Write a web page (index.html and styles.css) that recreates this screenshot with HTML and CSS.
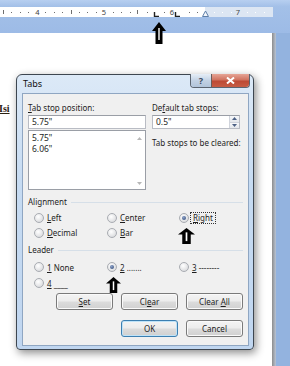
FILE: index.html
```html
<!DOCTYPE html>
<html lang="en">
<head>
  <meta charset="UTF-8" />
  <meta name="viewport" content="width=device-width, initial-scale=1.0" />
  <title>Tabs</title>
  <link rel="stylesheet" href="styles.css">
</head>
<body>
  <div class="top">
    <svg class="ruler" width="273" height="10" viewBox="0 0 273 10">
      <rect x="0" y="0" width="205" height="10" fill="#fff"/>
      <rect x="205" y="0" width="68" height="10" fill="#dce6f3"/>
      <g fill="#6f6f6f">
        <rect x="11" y="5" width="1" height="1"/><rect x="20" y="5" width="1" height="1"/><rect x="28" y="5" width="1" height="1"/>
        <rect x="45" y="5" width="1" height="1"/><rect x="54" y="5" width="1" height="1"/><rect x="62" y="5" width="1" height="1"/>
        <rect x="79" y="5" width="1" height="1"/><rect x="87" y="5" width="1" height="1"/><rect x="96" y="5" width="1" height="1"/>
        <rect x="113" y="5" width="1" height="1"/><rect x="121" y="5" width="1" height="1"/><rect x="130" y="5" width="1" height="1"/>
        <rect x="147" y="5" width="1" height="1"/><rect x="164" y="5" width="1" height="1"/>
        <rect x="189" y="5" width="1" height="1"/><rect x="197" y="5" width="1" height="1"/>
        <rect x="3" y="3" width="1" height="4"/><rect x="71" y="3" width="1" height="4"/><rect x="137" y="3" width="1" height="4"/>
      </g>
      <g fill="#ffffff">
        <rect x="214" y="5" width="1" height="1"/><rect x="222" y="5" width="1" height="1"/><rect x="231" y="5" width="1" height="1"/>
        <rect x="247" y="5" width="1" height="1"/><rect x="255" y="5" width="1" height="1"/><rect x="264" y="5" width="1" height="1"/>
      </g>
      <g class="ruler-num">
        <text x="37.5" y="8" text-anchor="middle">4</text>
        <text x="104" y="8" text-anchor="middle">5</text>
        <text x="172" y="8" text-anchor="middle">6</text>
        <text x="238" y="8" text-anchor="middle" fill="#7d8ea6">7</text>
      </g>
      <path d="M154.5 5v4.5h4.5" stroke="#222" stroke-width="1.4" fill="none"/>
      <path d="M175.5 5v4.5h4.5" stroke="#222" stroke-width="1.4" fill="none"/>
      <path d="M202.5 9.5l3-5.5 3 5.5z" stroke="#5d7ea8" stroke-width="1" fill="#f4f7fb"/>
    </svg>
  </div>

  <div class="main">
    <div class="page">
      <span class="isi">Isi</span>
    </div>
    <div class="page-edge"></div>
    <div class="side"></div>
  </div>

  <svg class="arrow arrow-ruler" viewBox="0 0 14 22" preserveAspectRatio="none">
    <path d="M7 0L14 9H10.5V22H3.5V9H0Z" fill="#000"/>
    <path d="M7 6V18" stroke="#fff" stroke-width="1.4"/>
  </svg>

  <div class="dialog">
    <div class="titlebar">
      <span class="title">Tabs</span>
      <div class="caption-btns">
        <span class="cap-help">?</span>
        <span class="cap-close">
          <svg width="9" height="7" viewBox="0 0 9 7"><path d="M1 0.5L8 6.5M8 0.5L1 6.5" stroke="#fff" stroke-width="2"/></svg>
        </span>
      </div>
    </div>

    <div class="panel">
      <div class="top-fields">
        <div class="col">
          <label class="lbl"><u>T</u>ab stop position:</label>
          <div class="textbox">5.75"</div>
          <div class="listbox">
            <div class="list-items">
              <div>5.75"</div>
              <div>6.06"</div>
            </div>
            <div class="list-scroll">
              <svg width="5" height="3" viewBox="0 0 5 3"><path d="M0 3L2.5 0 5 3z" fill="#b7b7b7"/></svg>
              <svg width="5" height="3" viewBox="0 0 5 3"><path d="M0 0L2.5 3 5 0z" fill="#b7b7b7"/></svg>
            </div>
          </div>
        </div>
        <div class="col">
          <label class="lbl">De<u>f</u>ault tab stops:</label>
          <div class="textbox spin-box">
            <span>0.5"</span>
            <div class="spinner">
              <span><svg width="5" height="3" viewBox="0 0 5 3"><path d="M0 3L2.5 0 5 3z" fill="#4d6185"/></svg></span>
              <span><svg width="5" height="3" viewBox="0 0 5 3"><path d="M0 0L2.5 3 5 0z" fill="#4d6185"/></svg></span>
            </div>
          </div>
          <div class="lbl cleared">Tab stops to be cleared:</div>
        </div>
      </div>

      <div class="group-head"><span>Alignment</span><i></i></div>
      <div class="radios align-radios">
        <div class="opt"><span class="radio"></span><span><u>L</u>eft</span></div>
        <div class="opt"><span class="radio"></span><span><u>C</u>enter</span></div>
        <div class="opt"><span class="radio on"></span><span class="focus"><u>R</u>ight</span></div>
        <div class="opt"><span class="radio"></span><span><u>D</u>ecimal</span></div>
        <div class="opt"><span class="radio"></span><span><u>B</u>ar</span></div>
      </div>

      <div class="group-head leader-head"><span>Leader</span><i></i></div>
      <div class="radios leader-radios">
        <div class="opt"><span class="radio"></span><span><u>1</u> None</span></div>
        <div class="opt"><span class="radio on"></span><span><u>2</u> .......</span></div>
        <div class="opt"><span class="radio"></span><span><u>3</u> --------</span></div>
        <div class="opt"><span class="radio"></span><span><u>4</u> ____</span></div>
      </div>

      <div class="btn-row">
        <button class="btn"><u>S</u>et</button>
        <button class="btn">Cl<u>e</u>ar</button>
        <button class="btn">Clear <u>A</u>ll</button>
      </div>
      <div class="btn-row btn-row-ok">
        <button class="btn btn-default">OK</button>
        <button class="btn">Cancel</button>
      </div>
    </div>
  </div>

  <svg class="arrow arrow-align" viewBox="0 0 14 22" preserveAspectRatio="none">
    <path d="M7 0L14 9H10.5V22H3.5V9H0Z" fill="#000"/>
    <path d="M7 6V18" stroke="#fff" stroke-width="1.4"/>
  </svg>
  <svg class="arrow arrow-leader" viewBox="0 0 14 22" preserveAspectRatio="none">
    <path d="M7 0L14 9H10.5V22H3.5V9H0Z" fill="#000"/>
    <path d="M7 6V18" stroke="#fff" stroke-width="1.4"/>
  </svg>
</body>
</html>
```

FILE: styles.css
```css
body {
  margin: 0;
  width: 290px;
  height: 366px;
  overflow: hidden;
  position: relative;
  background: #a3c0e8;
  font-family: "Noto Sans", "Open Sans", sans-serif;
  font-size: 8px;
  color: #1e1e1e;
}
u {
  text-decoration: underline;
  text-underline-offset: 1px;
}

/* ruler strip */
.top {
  height: 33px;
  background: linear-gradient(#b7cff0, #a3c0e8 20%, #9dbbe6);
  box-sizing: border-box;
  padding-top: 7px;
}
.ruler {
  display: block;
}
.ruler-num text {
  font-family: "Noto Sans", sans-serif;
  font-size: 7.5px;
  fill: #444;
}

/* page */
.main {
  display: flex;
  height: 333px;
}
.page {
  width: 272px;
  background: #fff;
  box-sizing: border-box;
  padding-top: 70px;
}
.isi {
  font-family: "Liberation Serif", serif;
  font-weight: bold;
  font-size: 10px;
  color: #2a2010;
  text-decoration: underline;
  margin-left: -1px;
}
.page-edge {
  width: 4px;
  background: linear-gradient(90deg, #8d8d8d, #b9c4d4);
}
.side {
  flex: 1;
  background: #93b3df;
}

/* arrows */
.arrow {
  position: absolute;
}
.arrow-ruler {
  left: 152px;
  top: 22px;
  width: 14px;
  height: 22px;
}
.arrow-align {
  left: 178px;
  top: 228px;
  width: 17px;
  height: 16px;
}
.arrow-leader {
  left: 106px;
  top: 277px;
  width: 15px;
  height: 16px;
}

/* dialog */
.dialog {
  position: absolute;
  left: 16px;
  top: 74px;
  width: 238px;
  height: 276px;
  box-sizing: border-box;
  border: 1px solid #3d4650;
  border-radius: 6px 6px 4px 4px;
  background: linear-gradient(#dce9f7, #c6dbf2 40%, #c0d6f0);
  padding: 0 4px 3px 5px;
  box-shadow: 2px 3px 8px rgba(0, 0, 0, 0.45);
}
.titlebar {
  height: 18px;
  display: flex;
  align-items: flex-start;
}
.title {
  font-size: 9px;
  line-height: 18px;
  padding-left: 1px;
  color: #111;
}
.caption-btns {
  margin-left: auto;
  margin-right: -1px;
  margin-top: -1px;
  display: flex;
  height: 13px;
  border: 1px solid #5b6470;
  border-top: none;
  border-radius: 0 0 4px 4px;
  overflow: hidden;
}
.cap-help {
  width: 20px;
  background: linear-gradient(#e6eef7, #c3d2e4 50%, #b1c4da);
  color: #3b4a5e;
  font-weight: bold;
  font-size: 9px;
  line-height: 13px;
  text-align: center;
  border-right: 1px solid #6b5d5a;
}
.cap-close {
  width: 37px;
  background: linear-gradient(#e6a596, #d07360 45%, #bd4a35 55%, #c65c44);
  display: flex;
  align-items: center;
  justify-content: center;
}
.panel {
  height: 253px;
  box-sizing: border-box;
  background: #f0f0f0;
  border: 1px solid #8fa6c2;
  padding: 9px 5px 0 5px;
}

/* text fields */
.top-fields {
  display: grid;
  grid-template-columns: 118px 88px;
  column-gap: 6px;
  align-items: start;
}
.lbl {
  display: block;
  line-height: 10px;
  margin-bottom: 2px;
  white-space: nowrap;
}
.textbox {
  height: 14px;
  box-sizing: border-box;
  background: #fff;
  border: 1px solid #b9bcc4;
  border-top-color: #9a9ea6;
  padding-left: 3px;
  line-height: 12px;
  font-size: 8.5px;
}
.listbox {
  margin-top: 1px;
  height: 60px;
  box-sizing: border-box;
  background: #fff;
  border: 1px solid #9a9ea6;
  display: flex;
  font-size: 8.5px;
}
.list-items {
  flex: 1;
  padding: 2px 0 0 3px;
  line-height: 10.5px;
}
.list-scroll {
  width: 11px;
  display: flex;
  flex-direction: column;
  justify-content: space-between;
  align-items: center;
  padding: 6px 0 4px;
}
.spin-box {
  display: flex;
  align-items: center;
  padding-right: 0;
}
.spin-box > span {
  flex: 1;
}
.spinner {
  width: 9px;
  height: 12px;
  display: flex;
  flex-direction: column;
  border-left: 1px solid #d0d4dc;
}
.spinner span {
  flex: 1;
  display: flex;
  align-items: center;
  justify-content: center;
  background: linear-gradient(#f7f8fa, #e4e7ec);
}
.spinner span + span {
  border-top: 1px solid #d0d4dc;
}
.cleared {
  margin-top: 9px;
}

/* groups */
.group-head {
  display: flex;
  align-items: center;
  line-height: 10px;
  margin-top: 7px;
}
.group-head i {
  flex: 1;
  margin-left: 4px;
  border-top: 1px solid #d6dfe8;
}
.leader-head {
  margin-top: 5px;
}
.radios {
  display: grid;
  grid-template-columns: 73px 72px auto;
  padding-left: 6px;
}
.align-radios {
  margin-top: 3px;
  grid-auto-rows: 15px;
}
.leader-radios {
  margin-top: 4px;
  grid-auto-rows: 16px;
}
.opt {
  display: flex;
  align-items: center;
  gap: 3px;
}
.radio {
  width: 10px;
  height: 10px;
  box-sizing: border-box;
  border-radius: 50%;
  border: 1px solid #a9acb2;
  background: radial-gradient(circle at 40% 35%, #ffffff, #e3e4e6 60%, #cfd1d4);
  position: relative;
}
.radio.on::after {
  content: "";
  position: absolute;
  left: 2px;
  top: 2px;
  width: 4px;
  height: 4px;
  border-radius: 50%;
  background: radial-gradient(circle at 40% 35%, #8aa0c8, #2c4572);
}
.focus {
  outline: 1px dotted #333;
  outline-offset: 0;
  padding: 0 2px;
  line-height: 10px;
  margin-left: -1px;
}

/* buttons */
.btn-row {
  display: grid;
  grid-template-columns: repeat(3, 57px);
  column-gap: 8px;
  justify-content: end;
  margin-top: 2px;
}
.btn-row-ok {
  grid-template-columns: repeat(2, 57px);
  margin-top: 10px;
}
.btn {
  height: 17px;
  margin: 0;
  padding: 0;
  font-family: inherit;
  font-size: 8px;
  color: #1e1e1e;
  border: 1px solid #7a7a7a;
  border-radius: 3px;
  background: linear-gradient(#f4f4f4, #ececec 48%, #dcdcdc 52%, #d0d0d0);
  box-shadow: inset 0 0 0 1px #fafafa;
}
.btn-default {
  border-color: #3c7fb1;
  box-shadow: inset 0 0 0 1px #bfe3f8;
}
```
